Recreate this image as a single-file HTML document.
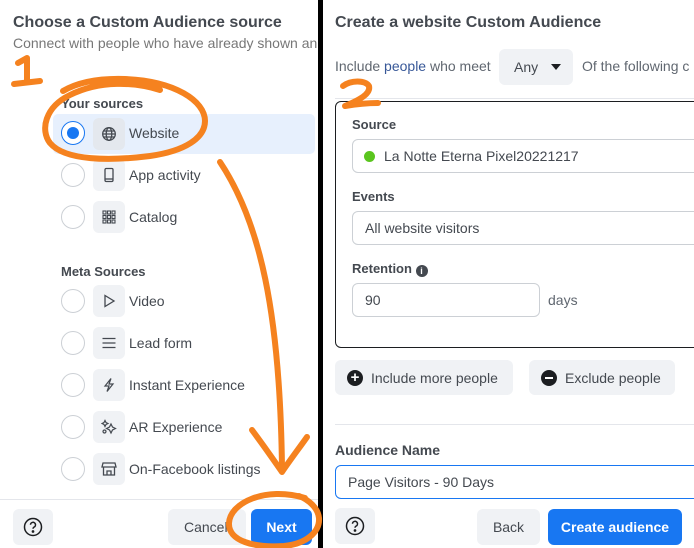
<!DOCTYPE html>
<html><head><style>
*{box-sizing:border-box;margin:0;padding:0}
body{width:694px;height:548px;overflow:hidden;background:#fff;font-family:"Liberation Sans",Arial,sans-serif;color:#1c1e21;position:relative}
.a{position:absolute;white-space:nowrap}
.b{font-weight:bold}
.radio{position:absolute;width:24px;height:24px;border:1px solid #ccd0d5;border-radius:50%;background:#fff}
.ic{position:absolute;width:32px;height:32px;background:#f0f2f5;border-radius:6px}
.lbl{position:absolute;font-size:14px;color:#444950}
.btn{position:absolute;background:#f0f2f5;border-radius:6px;font-size:14px;color:#444950;display:flex;align-items:center;justify-content:center}
.inp{position:absolute;border:1px solid #ccd0d5;border-radius:6px;background:#fff;font-size:14px;color:#444950;display:flex;align-items:center}
</style></head><body>
<div class="a" style="left:318px;top:0;width:5px;height:548px;background:#000"></div>

<!-- LEFT -->
<div class="a b" style="left:13px;top:14px;font-size:16px;color:#444950">Choose a Custom Audience source</div>
<div class="a" style="left:13px;top:35px;font-size:14px;color:#777;width:305px;overflow:hidden">Connect with people who have already shown an interest</div>
<div class="a b" style="left:61px;top:96px;font-size:13px;color:#444950">Your sources</div>
<div class="a" style="left:53px;top:114px;width:262px;height:40px;background:#e7f0fd;border-radius:5px"></div>
<div class="radio" style="left:61px;top:121px;border:1.5px solid #1877f2"><div style="position:absolute;left:4.5px;top:4.5px;width:12px;height:12px;border-radius:50%;background:#1877f2"></div></div>
<div class="ic" style="left:93px;top:118px;background:#e4e8ee"></div>
<svg class="a" style="left:101px;top:126px" width="16" height="16" viewBox="0 0 16 16" fill="none" stroke="#444950" stroke-width="1.3"><circle cx="8" cy="8" r="6.3"/><ellipse cx="8" cy="8" rx="2.8" ry="6.3"/><path d="M1.7 8h12.6M2.6 5h10.8M2.6 11h10.8"/></svg>
<div class="lbl" style="left:129px;top:125px">Website</div>

<div class="radio" style="left:61px;top:163px"></div><div class="ic" style="left:93px;top:159px"></div>
<svg class="a" style="left:101px;top:167px" width="16" height="16" fill="none" stroke="#444950" stroke-width="1.3"><rect x="4" y="1.5" width="8" height="13" rx="1.2"/><path d="M4 12h8"/></svg>
<div class="lbl" style="left:129px;top:167px">App activity</div>

<div class="radio" style="left:61px;top:205px"></div><div class="ic" style="left:93px;top:201px"></div>
<svg class="a" style="left:101px;top:209px" width="16" height="16" fill="none" stroke="#444950" stroke-width="1.1"><rect x="2" y="2" width="3" height="3"/><rect x="6.5" y="2" width="3" height="3"/><rect x="11" y="2" width="3" height="3"/><rect x="2" y="6.5" width="3" height="3"/><rect x="6.5" y="6.5" width="3" height="3"/><rect x="11" y="6.5" width="3" height="3"/><rect x="2" y="11" width="3" height="3"/><rect x="6.5" y="11" width="3" height="3"/><rect x="11" y="11" width="3" height="3"/></svg>
<div class="lbl" style="left:129px;top:209px">Catalog</div>

<div class="a b" style="left:61px;top:264px;font-size:13px;color:#444950">Meta Sources</div>
<div class="radio" style="left:61px;top:289px"></div><div class="ic" style="left:93px;top:285px"></div>
<svg class="a" style="left:101px;top:293px" width="16" height="16" fill="none" stroke="#444950" stroke-width="1.3"><path d="M4 2.5v11l9-5.5z"/></svg>
<div class="lbl" style="left:129px;top:293px">Video</div>
<div class="radio" style="left:61px;top:331px"></div><div class="ic" style="left:93px;top:327px"></div>
<svg class="a" style="left:101px;top:335px" width="16" height="16" fill="none" stroke="#444950" stroke-width="1.3"><path d="M1.5 3.5h13M1.5 8h13M1.5 12.5h13"/></svg>
<div class="lbl" style="left:129px;top:335px">Lead form</div>
<div class="radio" style="left:61px;top:373px"></div><div class="ic" style="left:93px;top:369px"></div>
<svg class="a" style="left:101px;top:377px" width="16" height="16" fill="none" stroke="#444950" stroke-width="1.2"><path d="M10 1.5L4 9h4l-2 5.5L12 7H8z"/></svg>
<div class="lbl" style="left:129px;top:377px">Instant Experience</div>
<div class="radio" style="left:61px;top:415px"></div><div class="ic" style="left:93px;top:411px"></div>
<svg class="a" style="left:101px;top:419px" width="16" height="16" fill="none" stroke="#444950" stroke-width="1.2"><path d="M4 1.5l1 2 2 1-2 1-1 2-1-2-2-1 2-1z"/><path d="M10 5l1.5 3 3 1.5-3 1.5-1.5 3-1.5-3-3-1.5 3-1.5z"/><circle cx="3.5" cy="12.5" r="1.5"/></svg>
<div class="lbl" style="left:129px;top:419px">AR Experience</div>
<div class="radio" style="left:61px;top:457px"></div><div class="ic" style="left:93px;top:453px"></div>
<svg class="a" style="left:101px;top:461px" width="16" height="16" fill="none" stroke="#444950" stroke-width="1.3"><path d="M2 2h12l1 4H1z"/><path d="M2.5 6v8h11V6M6 14v-4h4v4"/></svg>
<div class="lbl" style="left:129px;top:461px">On-Facebook listings</div>

<div class="a" style="left:0;top:499px;width:318px;height:1px;background:#e4e6eb"></div>
<div class="btn" style="left:13px;top:509px;width:40px;height:36px"><svg width="20" height="20" fill="none" stroke="#1c1e21" stroke-width="1.5"><circle cx="10" cy="10" r="8.5"/><path d="M7.5 7.8a2.5 2.5 0 1 1 3.5 2.3c-.7.4-1 .8-1 1.7"/><circle cx="10" cy="14.5" r=".6" fill="#1c1e21"/></svg></div>
<div class="btn" style="left:168px;top:509px;width:78px;height:36px;justify-content:flex-start;padding-left:16px">Cancel</div>
<div class="btn b" style="left:251px;top:509px;width:61px;height:36px;background:#1877f2;color:#fff">Next</div>

<!-- RIGHT -->
<div class="a b" style="left:335px;top:14px;font-size:16px;color:#444950">Create a website Custom Audience</div>
<div class="a" style="left:335px;top:58px;font-size:14px;color:#606770">Include <span style="color:#385898">people</span> who meet</div>
<div class="btn" style="left:499px;top:49px;width:74px;height:36px;justify-content:flex-start;padding-left:15px">Any<svg style="margin-left:13px" width="10" height="6"><path d="M0 0h10L5 6z" fill="#1c1e21"/></svg></div>
<div class="a" style="left:582px;top:58px;font-size:14px;color:#606770">Of the following c</div>
<div class="a" style="left:335px;top:98px;width:359px;height:1px;background:#e4e6eb"></div>
<div class="a" style="left:335px;top:101px;width:380px;height:247px;border:1.5px solid #1c1e21;border-radius:6px"></div>
<div class="a b" style="left:352px;top:117px;font-size:13px;color:#444950">Source</div>
<div class="inp" style="left:352px;top:139px;width:360px;height:34px;padding-left:11px"><span style="width:11px;height:11px;border-radius:50%;background:#5ac51e;margin-right:9px"></span>La Notte Eterna Pixel20221217</div>
<div class="a b" style="left:352px;top:189px;font-size:13px;color:#444950">Events</div>
<div class="inp" style="left:352px;top:211px;width:360px;height:34px;padding-left:12px">All website visitors</div>
<div class="a b" style="left:352px;top:261px;font-size:13px;color:#444950">Retention <span style="display:inline-block;width:12px;height:12px;border-radius:50%;background:#444950;color:#fff;font-size:9px;text-align:center;line-height:12px;vertical-align:-1px">i</span></div>
<div class="inp" style="left:352px;top:283px;width:188px;height:34px;padding-left:12px">90</div>
<div class="a" style="left:548px;top:292px;font-size:14px;color:#606770">days</div>
<div class="btn" style="left:335px;top:360px;width:178px;height:35px;justify-content:flex-start;padding-left:12px"><span style="width:16px;height:16px;border-radius:50%;background:#1c1e21;color:#fff;font-weight:bold;font-size:15px;line-height:16px;text-align:center;margin-right:8px">+</span>Include more people</div>
<div class="btn" style="left:529px;top:360px;width:146px;height:35px;justify-content:flex-start;padding-left:12px"><span style="width:16px;height:16px;border-radius:50%;background:#1c1e21;margin-right:8px;position:relative"><span style="position:absolute;left:4px;top:7px;width:8px;height:2px;background:#fff"></span></span>Exclude people</div>
<div class="a" style="left:335px;top:424px;width:359px;height:1px;background:#e4e6eb"></div>
<div class="a b" style="left:335px;top:442px;font-size:14px;color:#444950">Audience Name</div>
<div class="inp" style="left:335px;top:465px;width:380px;height:34px;border-color:#1877f2;padding-left:12px">Page Visitors - 90 Days</div>
<div class="btn" style="left:335px;top:508px;width:40px;height:36px"><svg width="20" height="20" fill="none" stroke="#1c1e21" stroke-width="1.5"><circle cx="10" cy="10" r="8.5"/><path d="M7.5 7.8a2.5 2.5 0 1 1 3.5 2.3c-.7.4-1 .8-1 1.7"/><circle cx="10" cy="14.5" r=".6" fill="#1c1e21"/></svg></div>
<div class="btn" style="left:477px;top:509px;width:63px;height:36px">Back</div>
<div class="btn b" style="left:548px;top:509px;width:134px;height:36px;background:#1877f2;color:#fff">Create audience</div>

<!-- orange annotations -->
<svg class="a" style="left:0;top:0" width="694" height="548" fill="none" stroke="#f5821f" stroke-width="6" stroke-linecap="round" stroke-linejoin="round">
<path d="M18 63l9-5v24M14 84l26-3"/>
<path d="M160 90c-25-8-60-10-90 5c-25 12-30 35-20 48c15 18 60 18 100 13c35-5 55-18 55-35c0-20-30-40-80-42c-30-1-50 5-62 12"/>
<path d="M220 162c40 60 60 150 62 306"/>
<path d="M252 430c15 20 25 35 30 42c8-12 18-25 25-35"/>
<path d="M305 498c-40-12-75 5-76 25c-1 18 25 25 55 23c22-2 36-14 35-28c-1-10-10-18-20-22"/>
<path d="M343 86c8-6 22-6 26 0c2 8-10 14-24 20c12-2 22-3 33-3"/>
</svg>
</body></html>
